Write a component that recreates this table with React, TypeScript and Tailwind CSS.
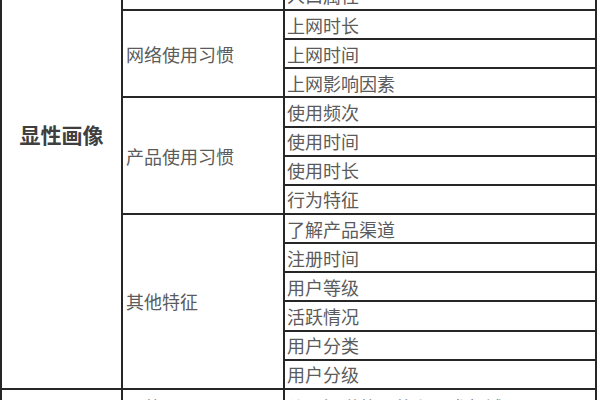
export default function App() {
  const cell = "bg-white flex items-center text-[18px] leading-none text-[#5b5b5b]"
  const sub = cell + " pl-[2px]"
  const group = cell + " pl-[3px]"

  return (
    <div className="w-[600px] h-[400px] overflow-hidden bg-white font-['Noto_Sans_CJK_SC',sans-serif]">
      <div className="mt-[-18.15px] w-[597px] bg-[#262626] px-[2px] grid grid-cols-[119px_160px_310px] grid-rows-[repeat(15,27.15px)] gap-[2px]">
        {/* 显性画像 */}
        <div className="row-span-14 bg-white flex justify-center items-start pt-[142px]">
          <span className="text-[21px] leading-[21px] font-bold text-[#3f3f3f]">显性画像</span>
        </div>

        {/* tail of previous group */}
        <div className="bg-white" />
        <div className={sub}>人口属性</div>

        {/* 网络使用习惯 */}
        <div className={group + " row-span-3"}>网络使用习惯</div>
        <div className={sub}>上网时长</div>
        <div className={sub}>上网时间</div>
        <div className={sub}>上网影响因素</div>

        {/* 产品使用习惯 */}
        <div className={group + " row-span-4"}>产品使用习惯</div>
        <div className={sub}>使用频次</div>
        <div className={sub}>使用时间</div>
        <div className={sub}>使用时长</div>
        <div className={sub}>行为特征</div>

        {/* 其他特征 */}
        <div className={group + " row-span-6"}>其他特征</div>
        <div className={sub}>了解产品渠道</div>
        <div className={sub}>注册时间</div>
        <div className={sub}>用户等级</div>
        <div className={sub}>活跃情况</div>
        <div className={sub}>用户分类</div>
        <div className={sub}>用户分级</div>

        {/* next block */}
        <div className="bg-white" />
        <div className={group + " items-start pt-[8px]"}>目的</div>
        <div className={sub + " items-start pt-[8px]"}>使用渠道的目的和需求领域</div>
      </div>
    </div>
  )
}
